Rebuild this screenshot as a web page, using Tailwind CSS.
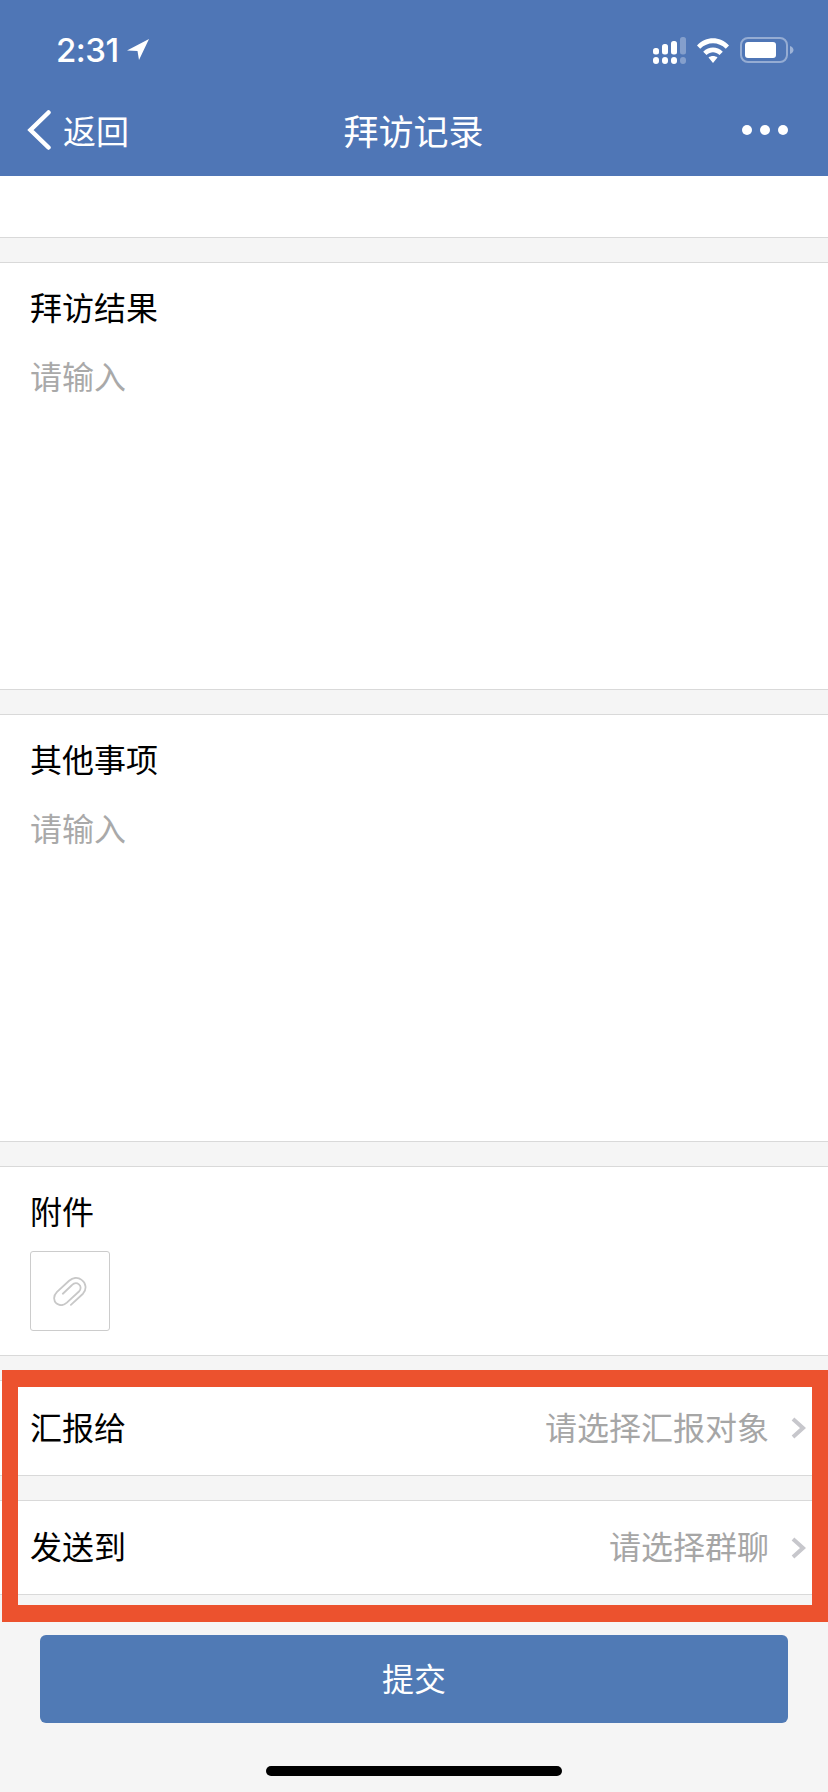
<!DOCTYPE html>
<html lang="zh-CN">
  <head>
    <meta charset="UTF-8" />
    <meta name="viewport" content="width=device-width, initial-scale=1.0" />
    <script src="https://cdn.jsdelivr.net/npm/@tailwindcss/browser@4"></script>
    <title>拜访记录</title>
  </head>
  <body class="bg-[#f5f5f5]">
    <div class="relative h-[1792px] w-[828px] overflow-hidden bg-[#f5f5f5] font-['Noto_Sans_CJK_SC',sans-serif] text-[32px] text-black">
      <!-- header -->
      <header class="h-[176px] bg-[#4f76b6] text-white">
        <div class="flex h-[100px] items-center justify-between pl-[56px] pr-[34px]">
          <div class="flex items-center gap-[8px]">
            <span class="font-['Inter',sans-serif] text-[33px] font-medium leading-[40px] tracking-[-0.5px]">2:31</span>
            <svg width="22" height="22" viewBox="0 0 22 22" fill="#fff"><path d="M22 0 L0 11.5 L10.5 12 L12 21 Z" /></svg>
          </div>
          <div class="flex items-center gap-[11px]">
            <svg width="33" height="27" viewBox="0 0 33 27" fill="#fff">
              <rect x="0" y="11" width="6" height="6.5" rx="2.5" />
              <rect x="9" y="7" width="6" height="10.5" rx="2.5" />
              <rect x="18" y="4" width="6" height="13.5" rx="2.5" />
              <rect x="27" y="0" width="6" height="17.5" rx="2.5" fill-opacity=".3" />
              <rect x="0" y="20" width="6" height="7" rx="3" />
              <rect x="9" y="20" width="6" height="7" rx="3" />
              <rect x="18" y="20" width="6" height="7" rx="3" />
              <rect x="27" y="20" width="6" height="7" rx="3" fill-opacity=".3" />
            </svg>
            <svg width="32" height="25" viewBox="0 0 32 25" fill="#fff">
              <path d="M0 7.5 C9 -2.2 23 -2.2 32 7.5 L28.8 10.8 C21.5 3.4 10.5 3.4 3.2 10.8 Z" />
              <path d="M6.2 13.8 C12 8.2 20 8.2 25.8 13.8 L22.5 17 C18.3 13.2 13.7 13.2 9.5 17 Z" />
              <path d="M11.5 19.5 C14 17.5 18 17.5 20.5 19.5 L16 25 Z" />
            </svg>
            <svg width="54" height="26" viewBox="0 0 54 26">
              <rect x="1" y="1" width="46" height="24" rx="7" fill="none" stroke="#fff" stroke-opacity=".4" stroke-width="2" />
              <rect x="5" y="5" width="31" height="16" rx="3" fill="#fff" />
              <path d="M50 9 C52.5 10 53.5 11.5 53.5 13 C53.5 14.5 52.5 16 50 17 Z" fill="#fff" fill-opacity=".45" />
            </svg>
          </div>
        </div>
        <div class="grid h-[60px] grid-cols-3 items-center pl-[27px] pr-[40px]">
          <div class="flex items-center gap-[12px]">
            <svg width="24" height="40" viewBox="0 0 24 40" fill="none" stroke="#fff" stroke-width="4.5" stroke-linecap="round" stroke-linejoin="miter"><path d="M21.5 2.5 L3.5 20 L21.5 37.5" /></svg>
            <span class="text-[33px] leading-[44px]">返回</span>
          </div>
          <div class="ml-[12px] whitespace-nowrap text-center text-[35px] leading-[44px]">拜访记录</div>
          <div class="flex justify-end gap-[8px]">
            <span class="h-[10px] w-[10px] rounded-full bg-white"></span>
            <span class="h-[10px] w-[10px] rounded-full bg-white"></span>
            <span class="h-[10px] w-[10px] rounded-full bg-white"></span>
          </div>
        </div>
      </header>

      <main>
        <div class="h-[61px] bg-white"></div>
        <div class="h-[26px] border-y border-[#d9d9d9] bg-[#f5f5f5]"></div>

        <section class="h-[426px] bg-white px-[30px] pt-[21px]">
          <h2 class="leading-[44px]">拜访结果</h2>
          <p class="mt-[25px] leading-[44px] text-[#a9a9a9]">请输入</p>
        </section>
        <div class="h-[26px] border-y border-[#d9d9d9] bg-[#f5f5f5]"></div>

        <section class="h-[426px] bg-white px-[30px] pt-[21px]">
          <h2 class="leading-[44px]">其他事项</h2>
          <p class="mt-[25px] leading-[44px] text-[#a9a9a9]">请输入</p>
        </section>
        <div class="h-[26px] border-y border-[#d9d9d9] bg-[#f5f5f5]"></div>

        <section class="h-[188px] bg-white pl-[30px] pt-[21px]">
          <h2 class="leading-[44px]">附件</h2>
          <div class="mt-[19px] flex h-[80px] w-[80px] items-center justify-center rounded-[3px] border border-[#cccccc]">
            <svg width="34" height="29" viewBox="0 0 38 32" fill="none" stroke="#c8c8c8" stroke-width="2" stroke-linecap="round"><path d="M20 31 L33.5 18.5 C38 14 37 6.5 32 3 C27.5 -0.5 22 0.5 18 4 L4.5 16.5 C0 21 0.5 26.5 4 29.5 C7.5 32 12 31.5 15.5 28.5 L29 16 C31.5 13.5 31.5 10 29 8 C26.5 6 23.5 6.5 21 9 L11 18.5" /></svg>
          </div>
        </section>
        <div class="h-[26px] border-y border-[#d9d9d9] bg-[#f5f5f5]"></div>

        <div class="flex h-[94px] items-center justify-between bg-white pl-[30px] pr-[22px]">
          <span class="pb-[5px] leading-[44px]">汇报给</span>
          <div class="flex items-center gap-[22px]">
            <span class="pb-[5px] leading-[44px] text-[#a6a6a6]">请选择汇报对象</span>
            <svg width="15" height="22" viewBox="0 0 15 22" fill="none" stroke="#c7c7cc" stroke-width="4"><path d="M2 2 L12 11 L2 20" /></svg>
          </div>
        </div>
        <div class="h-[26px] border-y border-[#d9d9d9] bg-[#f5f5f5]"></div>

        <div class="flex h-[94px] items-center justify-between border-b border-[#d9d9d9] bg-white pl-[30px] pr-[22px]">
          <span class="pb-[5px] leading-[44px]">发送到</span>
          <div class="flex items-center gap-[22px]">
            <span class="pb-[5px] leading-[44px] text-[#a6a6a6]">请选择群聊</span>
            <svg width="15" height="22" viewBox="0 0 15 22" fill="none" stroke="#c7c7cc" stroke-width="4"><path d="M2 2 L12 11 L2 20" /></svg>
          </div>
        </div>

        <button class="mx-[40px] mt-[40px] flex h-[88px] w-[748px] items-center justify-center rounded-[6px] bg-[#507ab5] pb-[5px] leading-[44px] text-white">提交</button>
      </main>

      <!-- home indicator -->
      <div class="absolute bottom-[16px] left-[266px] h-[10px] w-[296px] rounded-full bg-black"></div>

      <!-- red annotation frame drawn over the screenshot -->
      <div class="absolute left-[2px] top-[1370px] h-[252px] w-[826px] border-x-[16px] border-y-[17px] border-[#ec522e]"></div>
    </div>
  </body>
</html>
